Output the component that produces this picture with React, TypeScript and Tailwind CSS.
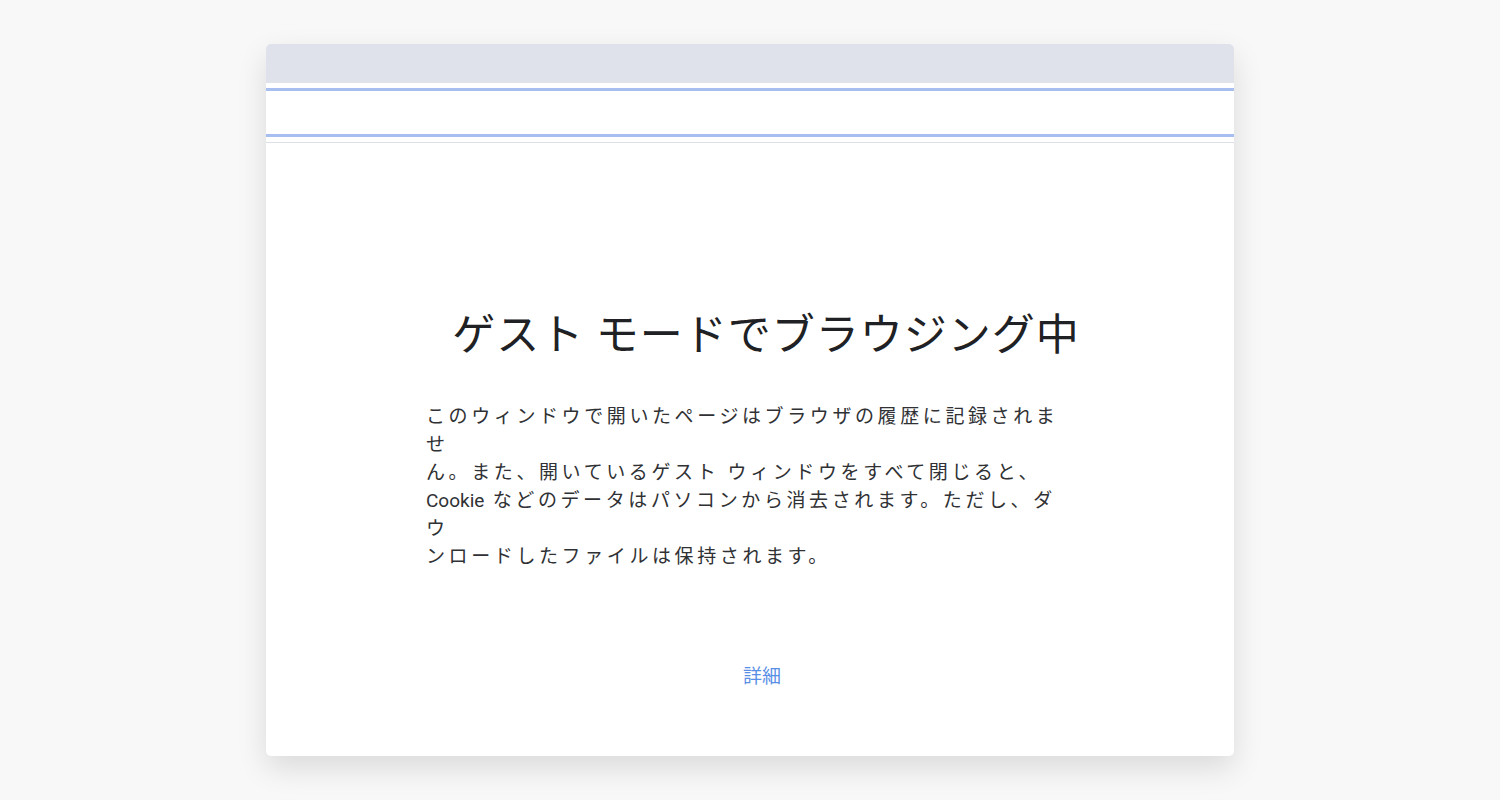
export default function App() {
  return (
    <div className="min-h-[800px] w-full bg-[#f8f8f8] flex justify-center pt-[44px]" style={{ fontFamily: 'Roboto, "Noto Sans CJK JP", sans-serif' }}>
      <div className="w-[968px] h-[712px] bg-white rounded-[5px] shadow-[0_12px_30px_rgba(0,0,0,0.12)] overflow-hidden flex flex-col">
        <div className="h-[39px] bg-[#dfe2ea]" />
        <div className="h-[5px]" />
        <div className="h-[3px] bg-[#a6bff0]" />
        <div className="h-[43px]" />
        <div className="h-[3px] bg-[#a6bff0]" />
        <div className="h-[5px]" />
        <div className="h-px bg-[#dcdfe3]" />
        <div className="flex flex-col items-center pt-[166px] pl-[24px]">
          <h1 className="text-[43px] leading-[52px] text-[#202124] tracking-[1px] pl-[8px]">ゲスト モードでブラウジング中</h1>
          <p className="mt-[42px] w-[652px] text-[19px] leading-[28px] text-[#303134] tracking-[3.6px] -ml-[20px]">
            このウィンドウで開いたページはブラウザの履歴に記録されませ<br />
            ん。また、開いているゲスト ウィンドウをすべて閉じると、<br />
            <span className="tracking-normal">Cookie</span> などのデータはパソコンから消去されます。ただし、ダウ<br />
            ンロードしたファイルは保持されます。
          </p>
          <a className="mt-[92px] text-[19px] text-[#5a8fe6]">詳細</a>
        </div>
      </div>
    </div>
  );
}
